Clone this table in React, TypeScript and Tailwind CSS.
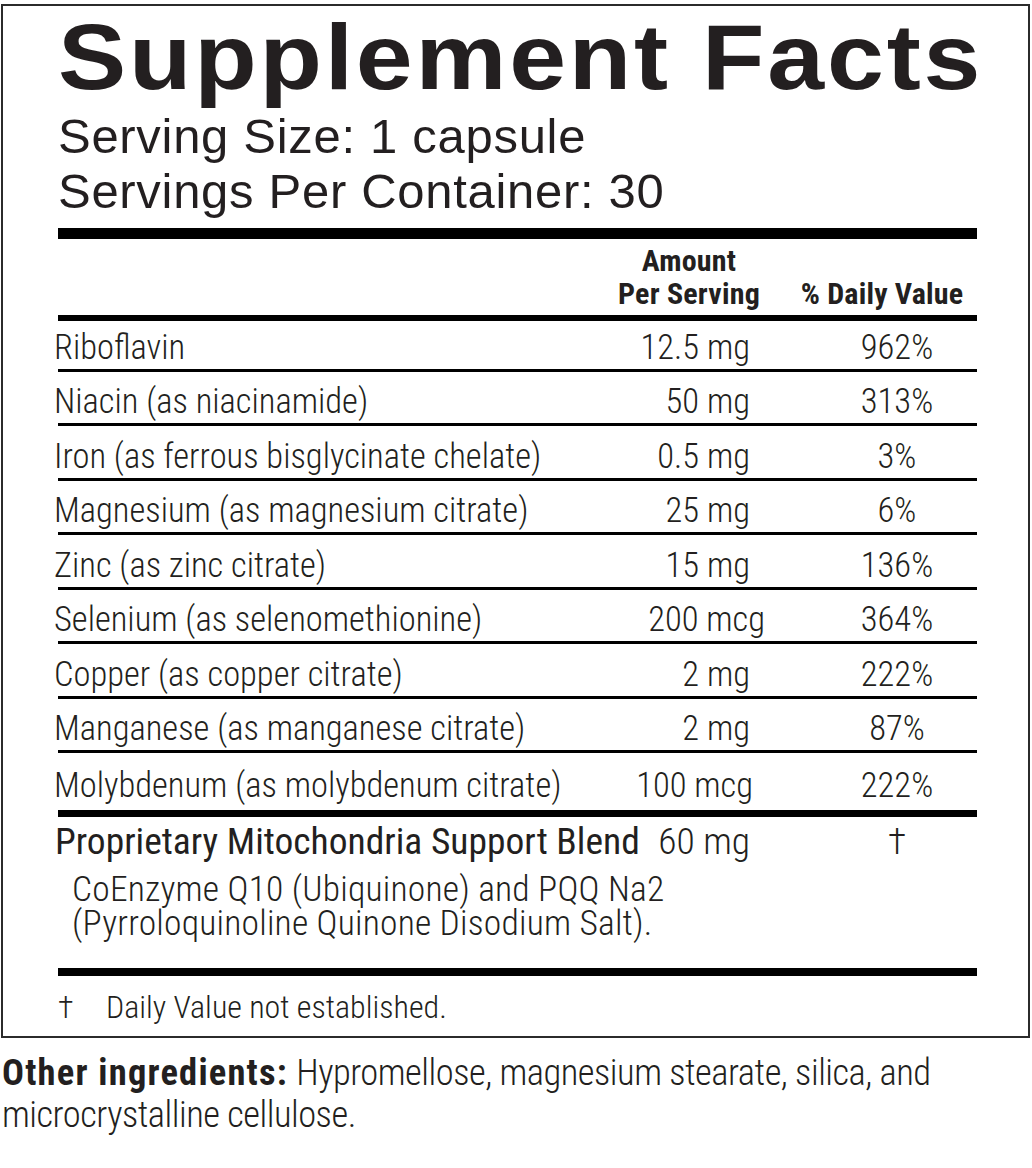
type Row = {
  name: string
  amount: string
  dv: string
  h: string
  pr: string
}

const rows: Row[] = [
  { name: 'Riboflavin', amount: '12.5 mg', dv: '962%', h: 'h-[51px]', pr: 'pr-[40px]' },
  { name: 'Niacin (as niacinamide)', amount: '50 mg', dv: '313%', h: 'h-[54px]', pr: 'pr-[40px]' },
  { name: 'Iron (as ferrous bisglycinate chelate)', amount: '0.5 mg', dv: '3%', h: 'h-[55px]', pr: 'pr-[40px]' },
  { name: 'Magnesium (as magnesium citrate)', amount: '25 mg', dv: '6%', h: 'h-[54px]', pr: 'pr-[40px]' },
  { name: 'Zinc (as zinc citrate)', amount: '15 mg', dv: '136%', h: 'h-[55px]', pr: 'pr-[40px]' },
  { name: 'Selenium (as selenomethionine)', amount: '200 mcg', dv: '364%', h: 'h-[54px]', pr: 'pr-[25px]' },
  { name: 'Copper (as copper citrate)', amount: '2 mg', dv: '222%', h: 'h-[55px]', pr: 'pr-[40px]' },
  { name: 'Manganese (as manganese citrate)', amount: '2 mg', dv: '87%', h: 'h-[54px]', pr: 'pr-[40px]' },
]

const cond = "font-['Roboto_Condensed',sans-serif]"

export default function App() {
  return (
    <div className="bg-white text-[#231f20] w-[1032px] min-h-[1168px]">
      {/* label box */}
      <div className="ml-[1px] mt-[4px] w-[1029px] border-2 border-[#2b2b2b] pl-[55px] pr-[51px] pt-[5px] pb-[11px]">
        <h1 className="font-['Liberation_Sans',Arial,sans-serif] font-bold text-[93px] leading-[93px] tracking-[2.5px] whitespace-nowrap">
          <span className="inline-block origin-left scale-x-[1.1]">Supplement Facts</span>
        </h1>
        <div className="mt-[4.5px] font-['Liberation_Sans',Arial,sans-serif] text-[49px] leading-[55px] tracking-[0.7px]">
          <div>Serving Size: 1 capsule</div>
          <div>Servings Per Container: 30</div>
        </div>

        <div className="mt-[9.5px] h-[11px] bg-black" />

        {/* column heads */}
        <div className={`flex pt-[5px] ${cond} font-bold text-[30px] leading-[33px] tracking-[0.2px]`}>
          <div className="flex-1" />
          <div className="w-[172px] pr-[30px] text-center whitespace-nowrap">
            <div>Amount</div>
            <div>Per Serving</div>
          </div>
          <div className="w-[187px] pr-[3px] flex flex-col justify-end text-center whitespace-nowrap">% Daily Value</div>
        </div>
        <div className="mt-[5px] h-[6px] bg-black" />

        {/* nutrient rows */}
        <div className={`${cond} font-light text-[34.5px] leading-[40px]`}>
          {rows.map((r) => (
            <div key={r.name} className={`flex items-end pb-[2px] border-b-[3px] border-black ${r.h}`}>
              <div className="flex-1 min-w-0 -ml-[4px] whitespace-nowrap">{r.name}</div>
              <div className={`w-[172px] text-right whitespace-nowrap ${r.pr}`}>{r.amount}</div>
              <div className="w-[187px] pl-[27px] text-center">{r.dv}</div>
            </div>
          ))}
          <div className="flex items-end pb-[5px] h-[57px]">
            <div className="flex-1 min-w-0 -ml-[4px] whitespace-nowrap">Molybdenum (as molybdenum citrate)</div>
            <div className="w-[172px] text-right whitespace-nowrap pr-[37px]">100 mcg</div>
            <div className="w-[187px] pl-[27px] text-center">222%</div>
          </div>
        </div>
        <div className="h-[7px] bg-black" />

        {/* proprietary blend */}
        <div className={`${cond} pt-[4px]`}>
          <div className="flex text-[37.5px] leading-[40px]">
            <div className="flex-1 min-w-0 -ml-[3px] whitespace-nowrap">Proprietary Mitochondria Support Blend</div>
            <div className="w-[172px] pr-[40px] text-right font-light whitespace-nowrap">60 mg</div>
            <div className="w-[187px] pl-[27px] text-center font-light">†</div>
          </div>
          <div className="mt-[11px] pl-[14px] font-light text-[35.5px] leading-[34px] tracking-[0.2px]">
            <div>CoEnzyme Q10 (Ubiquinone) and PQQ Na2</div>
            <div>(Pyrroloquinoline Quinone Disodium Salt).</div>
          </div>
        </div>
        <div className="mt-[28px] h-[8px] bg-black" />

        <div className={`mt-[13px] flex ${cond} font-light text-[32px] leading-[36px]`}>
          <span className="w-[48px]">†</span>
          <span>Daily Value not established.</span>
        </div>
      </div>

      {/* other ingredients */}
      <p className={`mt-[13.5px] pl-[2px] ${cond} font-light text-[36.5px] leading-[42px]`}>
        <span className="font-bold tracking-[1.2px]">Other ingredients:</span>{' '}
        <span className="tracking-[-0.5px]">
          Hypromellose, magnesium stearate, silica, and
          <br />
          microcrystalline cellulose.
        </span>
      </p>
    </div>
  )
}
